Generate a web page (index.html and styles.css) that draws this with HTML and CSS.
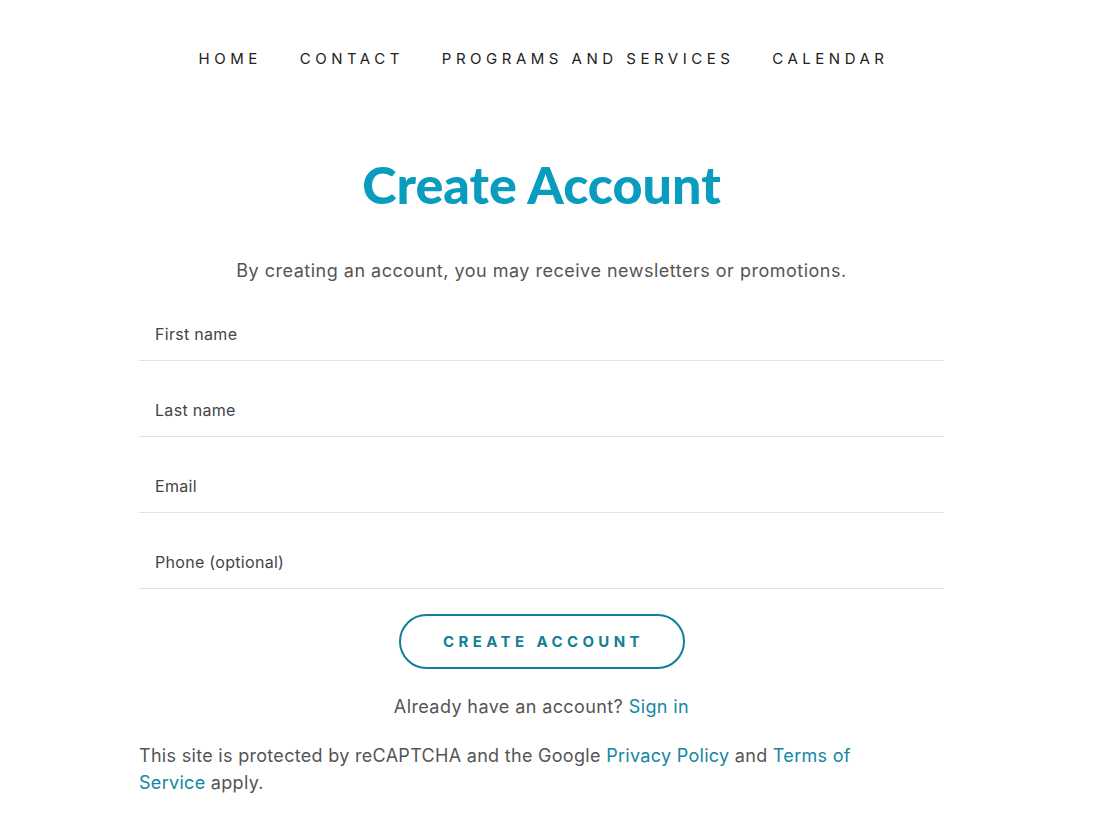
FILE: index.html
```html
<!DOCTYPE html>
<html lang="en">
<head>
<meta charset="utf-8">
<title>Create Account</title>
<link rel="stylesheet" href="styles.css">
</head>
<body>
<div class="page">
  <nav class="nav">
    <a class="nav-link" href="#">HOME</a>
    <a class="nav-link" href="#">CONTACT</a>
    <a class="nav-link" href="#">PROGRAMS AND SERVICES</a>
    <a class="nav-link" href="#">CALENDAR</a>
  </nav>
  <main class="main">
    <h1 class="title">Create Account</h1>
    <p class="intro">By creating an account, you may receive newsletters or promotions.</p>
    <form class="form">
      <label class="field"><span class="field-label">First name</span></label>
      <label class="field"><span class="field-label">Last name</span></label>
      <label class="field"><span class="field-label">Email</span></label>
      <label class="field"><span class="field-label">Phone (optional)</span></label>
      <div class="actions">
        <button type="button" class="btn">CREATE ACCOUNT</button>
      </div>
      <p class="signin">Already have an account? <a href="#" class="link">Sign in</a></p>
      <p class="legal">This site is protected by reCAPTCHA and the Google <a href="#" class="link">Privacy Policy</a> and <a href="#" class="link">Terms of<br>Service</a> apply.</p>
    </form>
  </main>
</div>
</body>
</html>
```
FILE: styles.css
```css
* { box-sizing: border-box; }
html, body { margin: 0; padding: 0; background: #fff; }
body { font-family: "Inter", "Open Sans", sans-serif; color: #555; }
.page { width: 1083px; }
.nav {
  display: flex;
  justify-content: center;
  gap: 38px;
  padding-top: 50px;
  padding-left: 4px;
  height: 96px;
}
.nav-link {
  font-size: 15px;
  letter-spacing: 4.5px;
  color: #222;
  text-decoration: none;
  line-height: 18px;
  font-weight: 400;
}
.main { display: flex; flex-direction: column; align-items: center; }
.title {
  margin: 58px 0 0;
  font-family: "Lato", sans-serif;
  font-weight: 900;
  font-size: 52px;
  line-height: 60px;
  color: #0a9cbf;
  letter-spacing: 0;
}
.intro {
  margin: 45px 0 0;
  font-size: 18px;
  line-height: 24px;
  letter-spacing: 0.5px;
  color: #555;
}
.form { width: 805px; margin-top: 2px; display: flex; flex-direction: column; }
.field {
  display: block;
  height: 76px;
  border-bottom: 1px solid #e2e2e2;
  padding: 39px 16px 0;
}
.field-label { font-size: 16px; line-height: 20px; color: #444; letter-spacing: 0.3px; }
.actions { display: flex; justify-content: center; margin-top: 25px; }
.btn {
  width: 286px;
  height: 55px;
  border: 2px solid #117f98;
  border-radius: 28px;
  background: #fff;
  color: #117f98;
  font-family: "Inter", sans-serif;
  font-weight: 700;
  font-size: 15px;
  letter-spacing: 4.4px;
  padding: 0 0 0 4px;
}
.signin { margin: 26px 0 0; text-align: center; font-size: 18px; line-height: 24px; letter-spacing: 0.4px; color: #555; }
.legal { margin: 23px 0 0; font-size: 18px; line-height: 27px; letter-spacing: 0.3px; color: #555; }
.link { color: #1386a3; text-decoration: none; }
```
